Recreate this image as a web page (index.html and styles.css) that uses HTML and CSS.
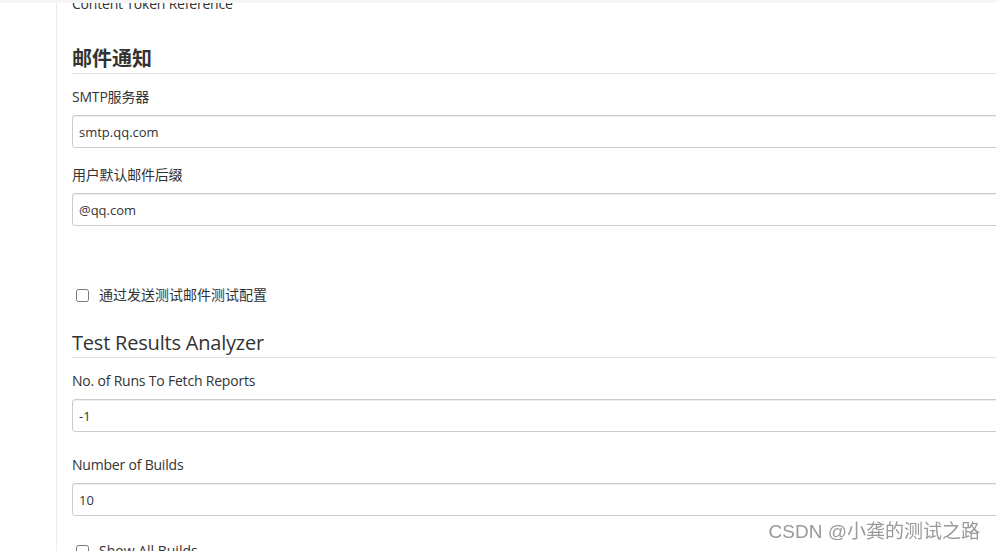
FILE: index.html
```html
<!DOCTYPE html>
<html lang="zh-CN">
<head>
    <meta charset="UTF-8">
    <meta name="viewport" content="width=device-width, initial-scale=1.0">
    <title>系统配置</title>
    <link rel="stylesheet" href="styles.css">
</head>
<body>
    <div id="top-strip"></div>
    <div id="page">
        <div id="side-panel"></div>
        <div id="main-panel">
            <div class="token-ref">Content Token Reference</div>

            <h2 class="section-title section-title-cjk">邮件通知</h2>
            <div class="setting">
                <label class="setting-name" for="smtp-server">SMTP服务器</label>
                <input type="text" id="smtp-server" class="setting-input" value="smtp.qq.com">
            </div>
            <div class="setting">
                <label class="setting-name" for="default-suffix">用户默认邮件后缀</label>
                <input type="text" id="default-suffix" class="setting-input" value="@qq.com">
            </div>
            <div class="check-row check-row-mail">
                <input type="checkbox" id="test-mail">
                <label for="test-mail">通过发送测试邮件测试配置</label>
            </div>

            <h2 class="section-title">Test Results Analyzer</h2>
            <div class="setting">
                <label class="setting-name" for="runs-fetch">No. of Runs To Fetch Reports</label>
                <input type="text" id="runs-fetch" class="setting-input" value="-1">
            </div>
            <div class="setting setting-wide">
                <label class="setting-name" for="num-builds">Number of Builds</label>
                <input type="text" id="num-builds" class="setting-input" value="10">
            </div>
            <div class="check-row check-row-builds">
                <input type="checkbox" id="show-all">
                <label for="show-all">Show All Builds</label>
            </div>
        </div>
    </div>
    <div id="watermark">CSDN @小龚的测试之路</div>
</body>
</html>
```

FILE: styles.css
```css
body {
    margin: 0;
    font-family: "Open Sans", "Noto Sans CJK SC", sans-serif;
    font-size: 14px;
    color: #333;
    background-color: #fff;
    overflow: hidden;
    height: 551px;
}
#top-strip {
    position: fixed;
    top: 0;
    left: 0;
    right: 0;
    height: 3px;
    background-color: #f5f5f5;
}
#page {
    display: flex;
    min-height: 100vh;
}
#side-panel {
    width: 56px;
    flex-shrink: 0;
    border-right: 1px solid #ececec;
}
#main-panel {
    flex: 1;
    padding-left: 15px;
    margin-right: -40px;
}
.token-ref {
    line-height: 20px;
    margin-top: -6px;
    letter-spacing: -0.2px;
}
.section-title {
    margin: 31px 0 0;
    font-size: 20px;
    font-weight: 500;
    line-height: 28px;
    letter-spacing: -0.2px;
    border-bottom: 1px solid #e2e2e2;
}
.section-title-cjk {
    font-weight: 700;
    letter-spacing: 0;
}
.section-title + .setting {
    margin-top: 13px;
}
.setting {
    display: flex;
    flex-direction: column;
    margin-top: 17px;
}
.setting-wide {
    margin-top: 23px;
}
.setting-name {
    line-height: 20px;
    margin-bottom: 8px;
    letter-spacing: -0.2px;
}
.setting-input {
    height: 33px;
    box-sizing: border-box;
    padding: 0 6px;
    border: 1px solid #ccc;
    border-radius: 3px;
    box-shadow: inset 0 1px 1px rgba(0, 0, 0, 0.075);
    font-family: "Open Sans", "Noto Sans CJK SC", sans-serif;
    font-size: 13px;
    color: #333;
}
.check-row {
    display: flex;
    align-items: center;
    line-height: 20px;
}
.check-row input {
    margin: 0 10px 0 4px;
    width: 13px;
    height: 13px;
}
.check-row-mail {
    margin-top: 59px;
}
.check-row-mail + .section-title {
    margin-top: 24px;
}
.check-row-builds {
    margin-top: 25px;
}
#watermark {
    position: fixed;
    right: 16px;
    bottom: 8px;
    font-family: "Liberation Sans", "Noto Sans CJK SC", sans-serif;
    font-size: 19px;
    color: #9a9a9a;
}
```
